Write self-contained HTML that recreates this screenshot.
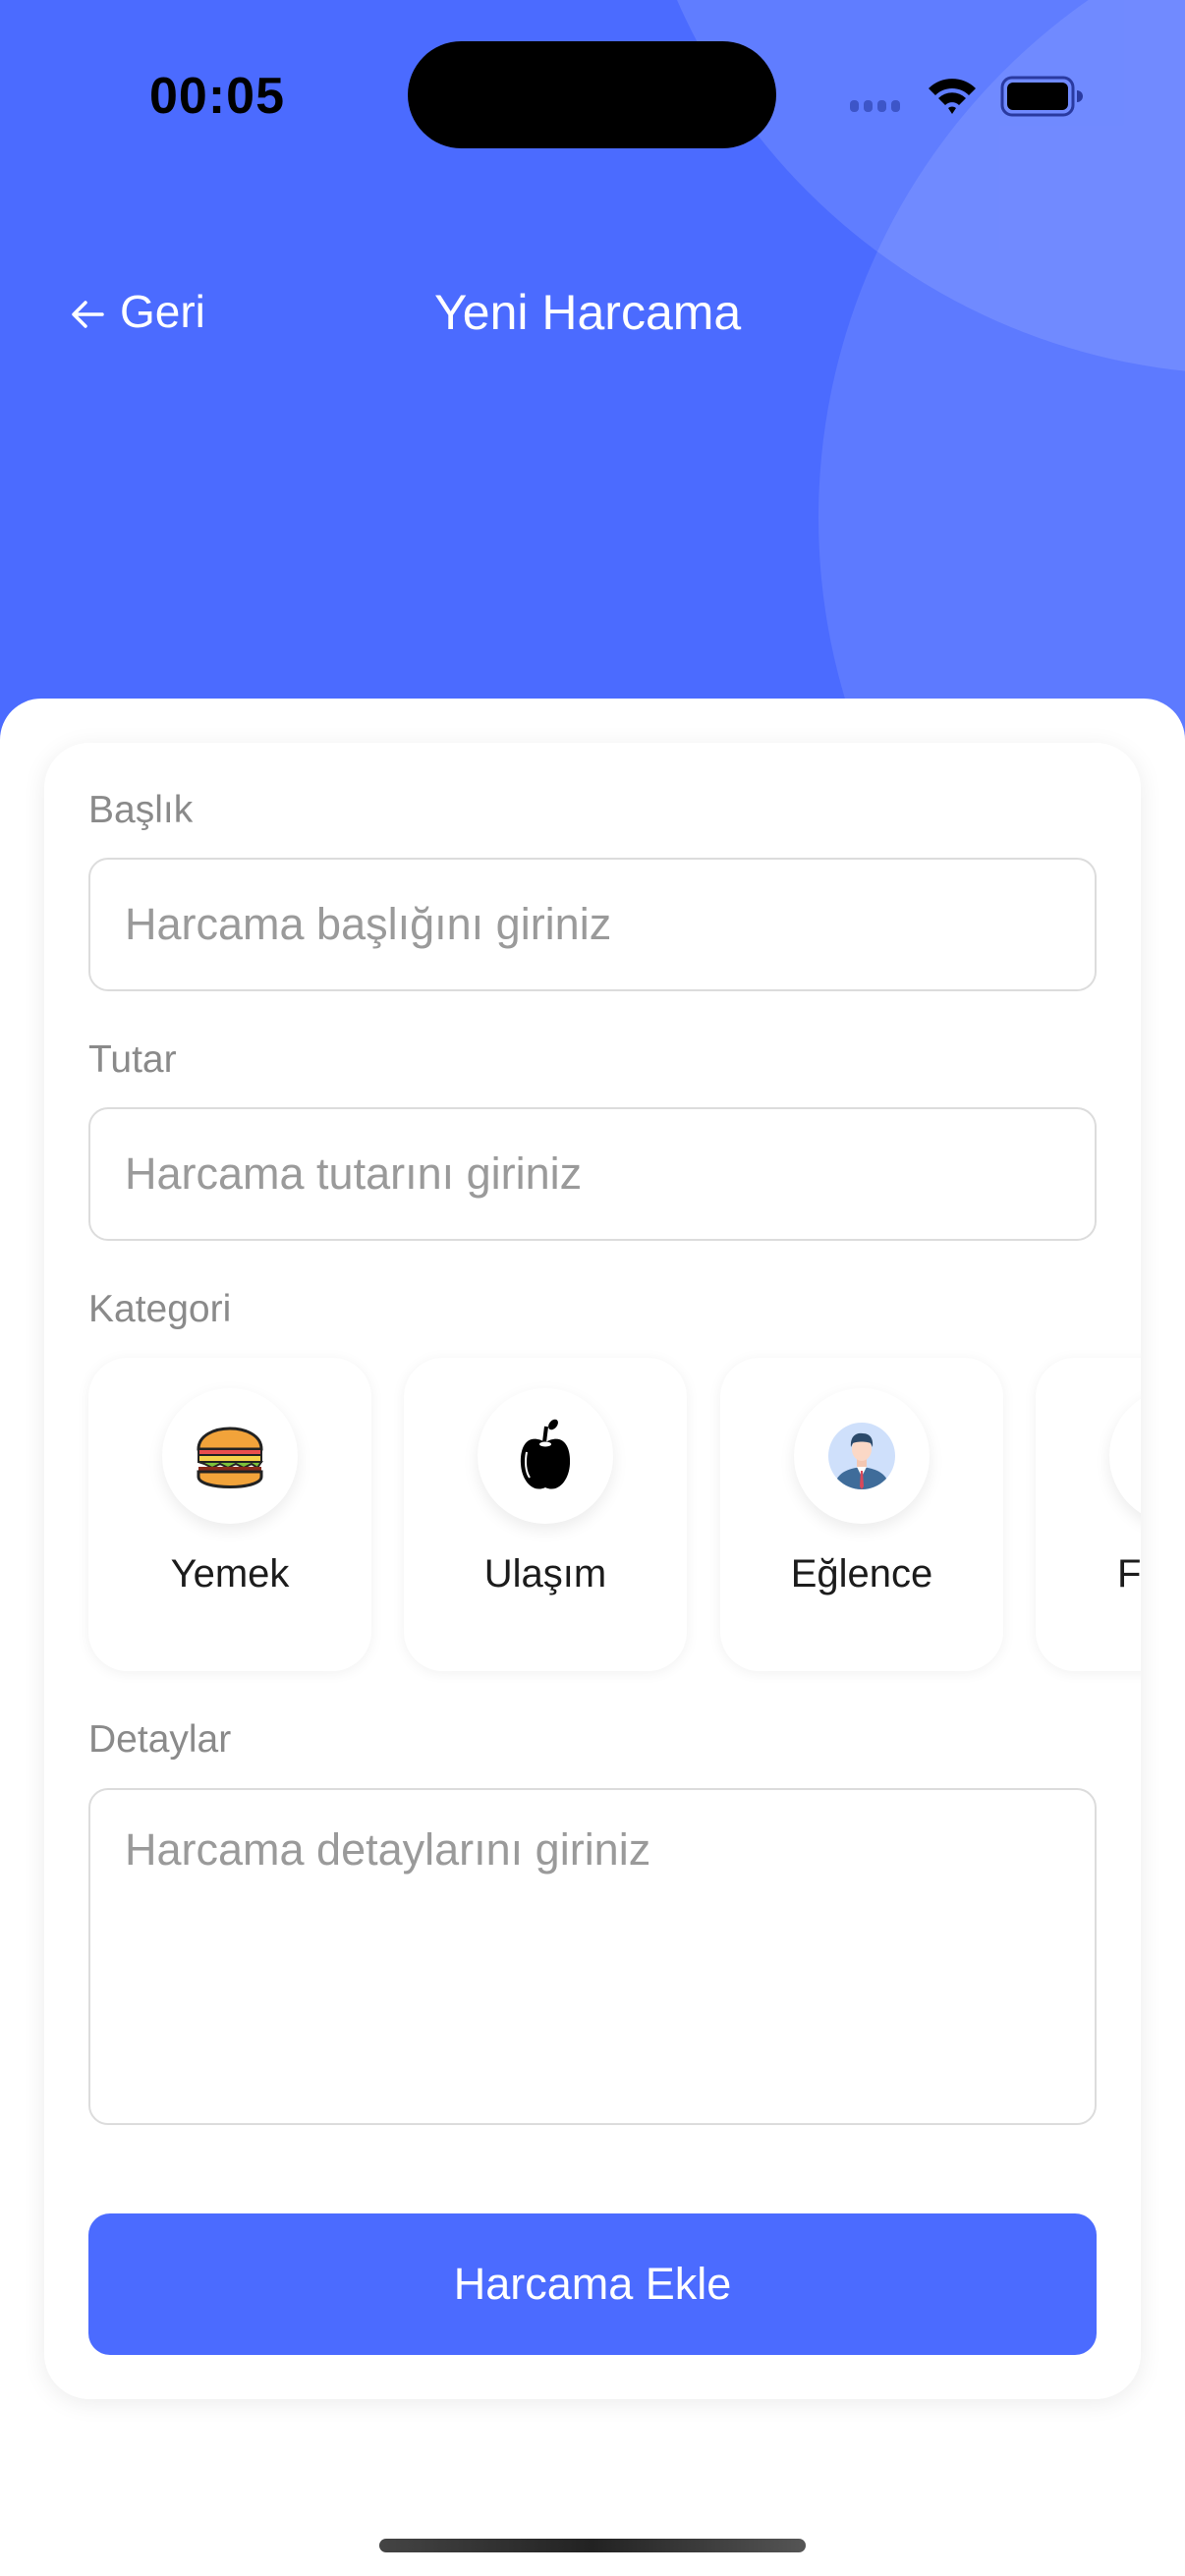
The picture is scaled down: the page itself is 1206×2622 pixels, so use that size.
<!DOCTYPE html>
<html><head><meta charset="utf-8"><style>
*{margin:0;padding:0;box-sizing:border-box}
body{width:1206px;height:2622px;position:relative;overflow:hidden;background:#fff;font-family:"Liberation Sans",sans-serif}
.hdr{position:absolute;left:0;top:0;width:1206px;height:760px;background:#4b6bff;overflow:hidden}
.c1{position:absolute;left:636px;top:-889px;width:1270px;height:1270px;border-radius:50%;background:rgba(255,255,255,0.12)}
.c2{position:absolute;left:833px;top:-116px;width:1286px;height:1286px;border-radius:50%;background:rgba(255,255,255,0.1)}
.time{position:absolute;left:152px;top:68px;font-size:52px;font-weight:bold;color:#000;letter-spacing:1px}
.island{position:absolute;left:415px;top:42px;width:375px;height:109px;border-radius:55px;background:#000}
.nav{position:absolute;top:290px;color:#fff;font-size:46px}
.sheet{position:absolute;left:0;top:711px;width:1206px;height:1911px;background:#fff;border-radius:42px 42px 0 0}
.card{position:absolute;left:45px;top:756px;width:1116px;height:1686px;background:#fff;border-radius:46px;box-shadow:0 4px 24px rgba(0,0,0,0.08)}
.lbl{position:absolute;left:90px;font-size:39px;color:#8a8a8a}
.inp{position:absolute;left:90px;width:1026px;border:2px solid #dcdcdc;border-radius:20px;font-size:45px;color:#9a9a9a;padding-left:35px}
.scroll{position:absolute;left:45px;top:1370px;width:1116px;height:345px;overflow:hidden}
.cat{position:absolute;top:12px;width:288px;height:319px;background:#fff;border-radius:40px;box-shadow:0 2px 14px rgba(0,0,0,0.06)}
.cat .ci{position:absolute;left:75px;top:31px;width:138px;height:138px;border-radius:50%;background:#fff;box-shadow:0 6px 16px rgba(0,0,0,0.08);display:flex;align-items:center;justify-content:center}
.cat .t{position:absolute;left:0;width:100%;top:198px;text-align:center;font-size:40px;color:#1c1c1c}
.btn{position:absolute;left:90px;top:2253px;width:1026px;height:144px;border-radius:22px;background:#4b6bff;color:#fff;font-size:45px;text-align:center;line-height:144px}
.home{position:absolute;left:386px;top:2584px;width:434px;height:14px;border-radius:7px;background:linear-gradient(90deg,#444,#222 50%,#555)}
</style></head><body>
<div class="hdr"><div class="c1"></div><div class="c2"></div></div>
<div class="time">00:05</div>
<div class="island"></div>
<svg style="position:absolute;left:862px;top:100px" width="62" height="16"><g fill="#3d55c8"><rect x="3" y="2" width="9" height="12" rx="4"/><rect x="17" y="2" width="9" height="12" rx="4"/><rect x="31" y="2" width="9" height="12" rx="4"/><rect x="45" y="2" width="9" height="12" rx="4"/></g></svg>
<svg style="position:absolute;left:943px;top:76px" width="52" height="42" viewBox="0 0 52 42"><path d="M2 14 A34 34 0 0 1 50 14 L43 21 A24 24 0 0 0 9 21Z M12 24 A20 20 0 0 1 40 24 L33 31 A10 10 0 0 0 19 31Z M22 34 A6 6 0 0 1 30 34 L26 40Z" fill="#000"/></svg>
<svg style="position:absolute;left:1018px;top:77px" width="84" height="42" viewBox="0 0 84 42"><rect x="2" y="2" width="72" height="38" rx="10" fill="none" stroke="#2a3aa0" stroke-width="3"/><rect x="7" y="7" width="62" height="28" rx="6" fill="#000"/><path d="M78 15 a5 5 0 0 1 0 12z" fill="#2a3aa0"/></svg>
<svg style="position:absolute;left:72px;top:305px" width="34" height="30" viewBox="0 0 34 30"><path d="M32 15 H4 M15 3 L3 15 L15 27" stroke="#fff" stroke-width="3.5" fill="none" stroke-linecap="round" stroke-linejoin="round"/></svg>
<div class="nav" style="left:122px">Geri</div>
<div class="nav" style="left:442px;font-size:50px;top:289px">Yeni Harcama</div>
<div class="sheet"></div>
<div class="card"></div>
<div class="lbl" style="top:803px">Başlık</div>
<div class="inp" style="top:873px;height:136px;line-height:132px">Harcama başlığını giriniz</div>
<div class="lbl" style="top:1057px">Tutar</div>
<div class="inp" style="top:1127px;height:136px;line-height:132px">Harcama tutarını giriniz</div>
<div class="lbl" style="top:1311px">Kategori</div>
<div class="scroll">
 <div class="cat" style="left:45px"><div class="ci"><svg width="72" height="70" viewBox="0 0 72 70"><path d="M4 28 C4 0 68 0 68 28Z" fill="#f2a33a" stroke="#222" stroke-width="3"/><rect x="4" y="28" width="64" height="6" fill="#e94e4e" stroke="#222" stroke-width="2"/><rect x="4" y="34" width="64" height="7" fill="#f5d24a" stroke="#222" stroke-width="2"/><path d="M4 41 L68 41 L64 47 L58 43 L50 47 L42 43 L34 47 L26 43 L18 47 L10 43Z" fill="#7cc13a" stroke="#222" stroke-width="2"/><rect x="4" y="46" width="64" height="5" fill="#8a2a1a"/><path d="M4 51 L68 51 L68 56 C68 70 4 70 4 56Z" fill="#f2a33a" stroke="#222" stroke-width="3"/></svg></div><div class="t">Yemek</div></div>
 <div class="cat" style="left:366px"><div class="ci"><svg width="60" height="76" viewBox="0 0 60 76"><path d="M30 24 C12 14 4 28 5 46 C6 64 18 76 30 70 C42 76 54 64 55 46 C56 28 48 14 30 24Z" fill="#000"/><path d="M29 24 L31 8" stroke="#000" stroke-width="4"/><ellipse cx="38" cy="6" rx="6" ry="4" transform="rotate(-50 38 6)" fill="#000"/><ellipse cx="30" cy="26" rx="6" ry="2.5" fill="#fff"/><path d="M11 34 C9 44 10 54 14 60" stroke="#fff" stroke-width="2" fill="none"/></svg></div><div class="t">Ulaşım</div></div>
 <div class="cat" style="left:688px"><div class="ci"><svg width="70" height="70" viewBox="0 0 70 70"><clipPath id="cp"><circle cx="35" cy="35" r="34"/></clipPath><circle cx="35" cy="35" r="34" fill="#cfe0fb"/><g clip-path="url(#cp)"><path d="M6 70 C8 52 20 48 35 46 C50 48 62 52 64 70Z" fill="#3f6c9a"/><path d="M30 46 L35 56 L40 46Z" fill="#fff"/><path d="M34 50 L36 50 L37 66 L35 69 L33 66Z" fill="#d9485a"/><rect x="30" y="36" width="10" height="10" fill="#f3c7b2"/><ellipse cx="35" cy="28" rx="10" ry="12" fill="#fbd8c6"/><path d="M24 26 C23 14 30 11 36 12 C44 12 47 18 46 26 L44 22 C40 20 30 20 26 22Z" fill="#2c4a6a"/></g></svg></div><div class="t">Eğlence</div></div>
 <div class="cat" style="left:1009px"><div class="ci"></div><div class="t" style="text-align:left;left:83px">F</div></div>
</div>
<div class="lbl" style="top:1749px">Detaylar</div>
<div class="inp" style="top:1820px;height:343px;padding-top:36px;line-height:50px">Harcama detaylarını giriniz</div>
<div class="btn">Harcama Ekle</div>
<div class="home"></div>
</body></html>
